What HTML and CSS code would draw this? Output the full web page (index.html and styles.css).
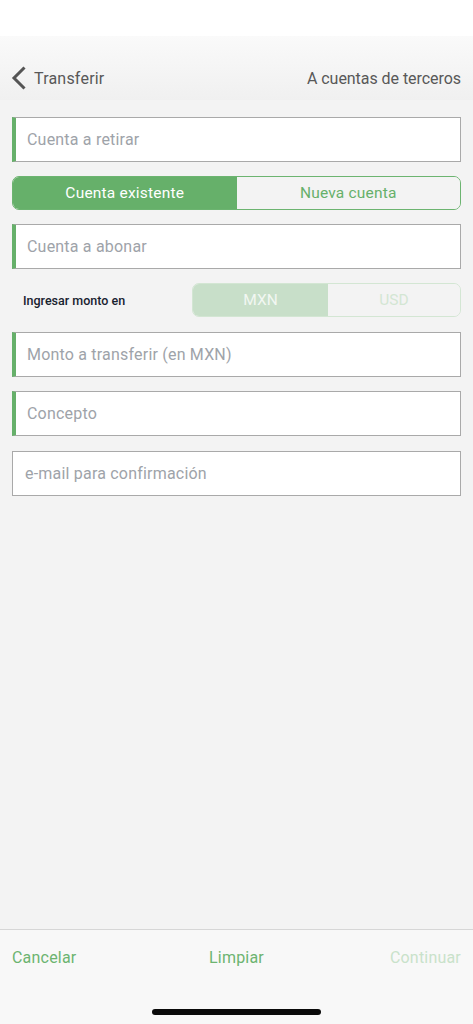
FILE: index.html
```html
<!DOCTYPE html>
<html lang="es">
<head>
<meta charset="utf-8">
<link rel="stylesheet" href="styles.css">
</head>
<body>
<div class="screen">
  <div class="status"></div>
  <header class="nav">
    <div class="back">
      <svg class="chev" width="16" height="24" viewBox="0 0 16 24"><path d="M13.5 1.5 L3 12 L13.5 22.5" fill="none" stroke="#555" stroke-width="3" stroke-linecap="butt" stroke-linejoin="miter"/></svg>
      <span>Transferir</span>
    </div>
    <div class="title">A cuentas de terceros</div>
  </header>
  <main class="form">
    <div class="field accent">Cuenta a retirar</div>
    <div class="seg">
      <div class="seg-item on">Cuenta existente</div>
      <div class="seg-item">Nueva cuenta</div>
    </div>
    <div class="field accent">Cuenta a abonar</div>
    <div class="currency">
      <div class="cur-label">Ingresar monto en</div>
      <div class="toggle">
        <div class="tog-item on">MXN</div>
        <div class="tog-item">USD</div>
      </div>
    </div>
    <div class="field accent gap15">Monto a transferir (en MXN)</div>
    <div class="field accent">Concepto</div>
    <div class="field plain gap15">e-mail para confirmación</div>
  </main>
  <footer class="bar">
    <div class="actions">
      <span class="act left">Cancelar</span>
      <span class="act">Limpiar</span>
      <span class="act dim right">Continuar</span>
    </div>
    <div class="home"></div>
  </footer>
</div>
</body>
</html>
```
FILE: styles.css
```css
* { box-sizing: border-box; }
html, body { margin: 0; padding: 0; }
body {
  font-family: "Roboto", "Liberation Sans", sans-serif;
  background: #f3f3f3;
}
.screen {
  width: 473px;
  height: 1024px;
  display: flex;
  flex-direction: column;
  background: #f3f3f3;
}
.status { height: 36px; background: #ffffff; }
.nav {
  height: 64px;
  background: linear-gradient(#fafafa, #f0f0f0);
  display: flex;
  align-items: center;
  justify-content: space-between;
  padding: 30px 12px 10px 11px;
  color: #585858;
  font-size: 16px;
  letter-spacing: 0.2px;
}
.back { display: flex; align-items: center; gap: 7px; }
.chev { display: block; }
.title { letter-spacing: -0.05px; }
.form {
  flex: 1;
  display: flex;
  flex-direction: column;
  padding: 17px 12px 0;
}
.field {
  height: 45px;
  background: #fff;
  border: 1px solid #a9a9a9;
  display: flex;
  align-items: center;
  padding-left: 12px;
  color: #9ea3a9;
  font-size: 16px;
  letter-spacing: 0.2px;
  margin-bottom: 14px;
}
.field.accent { border-left: 4px solid #66b06a; padding-left: 11px; }
.gap15 { margin-top: 1px; }
.seg {
  height: 34px;
  display: flex;
  border: 1px solid #6cb470;
  border-radius: 7px;
  overflow: hidden;
  margin-bottom: 14px;
}
.seg-item {
  flex: 1;
  display: flex;
  align-items: center;
  justify-content: center;
  font-size: 15.5px;
  letter-spacing: 0.2px;
  color: #66b06a;
  background: #f3f3f3;
}
.seg-item.on { background: #66b06a; color: #fff; }
.currency {
  height: 34px;
  display: flex;
  align-items: center;
  justify-content: space-between;
  margin-bottom: 14px;
}
.cur-label {
  padding-left: 11px;
  font-size: 12.5px;
  font-weight: 500;
  color: #18222f;
}
.toggle {
  width: 269px;
  height: 34px;
  display: flex;
  border: 1px solid #d3e6d3;
  border-radius: 7px;
  overflow: hidden;
}
.tog-item {
  flex: 1;
  display: flex;
  align-items: center;
  justify-content: center;
  font-size: 15.5px;
  color: #d3e6d3;
  background: #f3f3f3;
}
.tog-item.on { background: #c8dfc9; color: #f2f7f2; flex: 0 0 135px; }
.bar {
  height: 95px;
  background: #f8f8f8;
  border-top: 1px solid #d6d6d6;
  display: flex;
  flex-direction: column;
}
.actions {
  display: grid;
  grid-template-columns: 1fr auto 1fr;
  align-items: center;
  padding: 0 12px;
  height: 54px;
}
.act { color: #6cb470; font-size: 16px; letter-spacing: 0.2px; }
.act.left { justify-self: start; }
.act.right { justify-self: end; }
.act.dim { color: #c9e2ca; }
.home {
  width: 169px;
  height: 6px;
  border-radius: 3px;
  background: #0a0a0a;
  margin: 25px auto 0;
}
```
